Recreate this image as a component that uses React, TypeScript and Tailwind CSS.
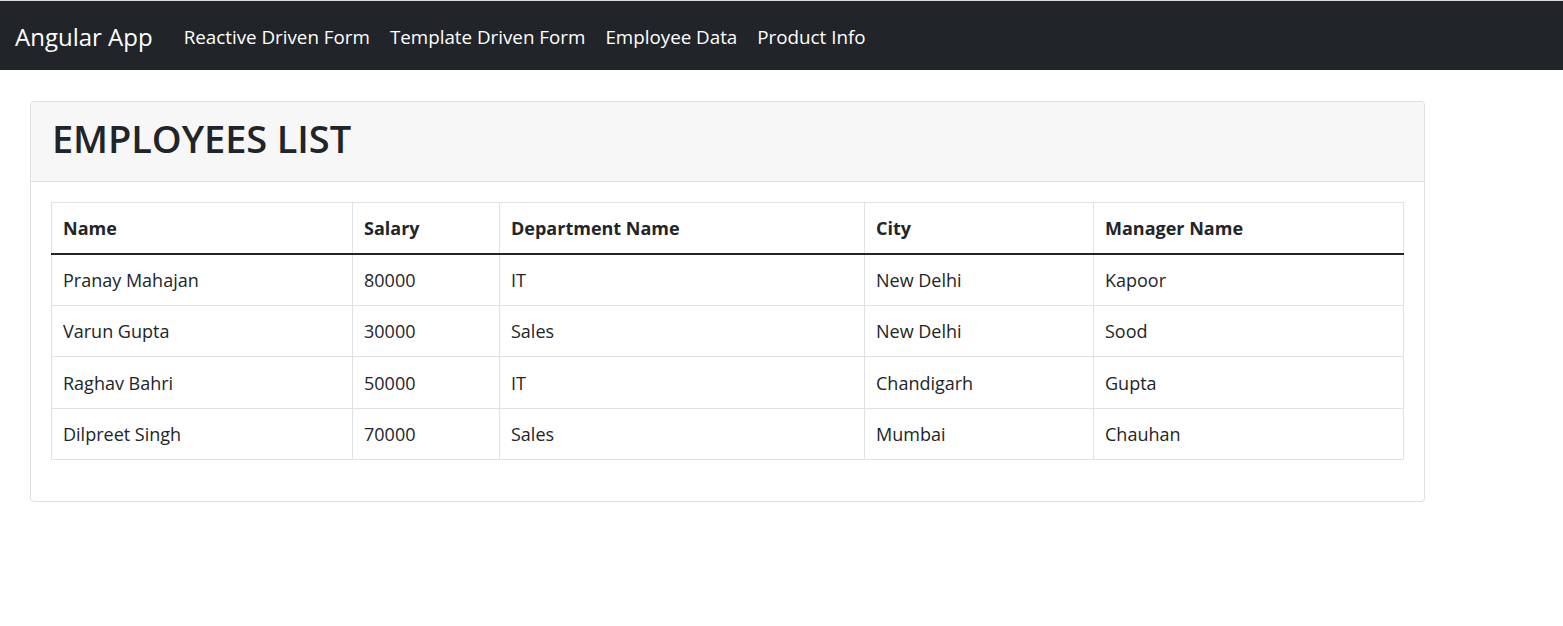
const employees = [
  { name: "Pranay Mahajan", salary: 80000, dept: "IT", city: "New Delhi", manager: "Kapoor" },
  { name: "Varun Gupta", salary: 30000, dept: "Sales", city: "New Delhi", manager: "Sood" },
  { name: "Raghav Bahri", salary: 50000, dept: "IT", city: "Chandigarh", manager: "Gupta" },
  { name: "Dilpreet Singh", salary: 70000, dept: "Sales", city: "Mumbai", manager: "Chauhan" },
];

const App = () => {
  return (
    <div className="min-h-[626px] bg-white text-[#212529] font-['Open_Sans',sans-serif]">
      <div className="border-t border-[#dcdcdc]">
        <nav className="flex items-center h-[69px] bg-[#212529] pl-[15px] pt-[3px]">
          <a className="text-[24px] text-white mr-[31px] leading-none">Angular App</a>
          <div className="flex gap-[20px] text-[18.8px] text-white">
            <a>Reactive Driven Form</a>
            <a>Template Driven Form</a>
            <a>Employee Data</a>
            <a>Product Info</a>
          </div>
        </nav>
      </div>

      <div className="pt-[31px] pl-[30px] w-[1425px]">
        <div className="border border-[#dfdfdf] rounded-[4px]">
          <div className="h-[80px] flex items-center px-[21px] pb-[6px] bg-[#f7f7f7] border-b border-[#dfdfdf] rounded-t-[4px]">
            <h1 className="text-[38px] font-semibold tracking-[-0.1px]">EMPLOYEES LIST</h1>
          </div>
          <div className="px-[20px] pt-[20px] pb-[41px]">
            <table className="w-[1353px] border-collapse text-[18px] table-fixed">
              <thead>
                <tr>
                  <th className="w-[301px] border border-[#dee2e6] border-b-[#212529] border-b-2 text-left font-bold px-[11px] h-[51px] pt-[2px]">Name</th>
                  <th className="w-[147px] border border-[#dee2e6] border-b-[#212529] border-b-2 text-left font-bold px-[11px] pt-[2px]">Salary</th>
                  <th className="w-[365px] border border-[#dee2e6] border-b-[#212529] border-b-2 text-left font-bold px-[11px] pt-[2px]">Department Name</th>
                  <th className="w-[229px] border border-[#dee2e6] border-b-[#212529] border-b-2 text-left font-bold px-[11px] pt-[2px]">City</th>
                  <th className="w-[310px] border border-[#dee2e6] border-b-[#212529] border-b-2 text-left font-bold px-[11px] pt-[2px]">Manager Name</th>
                </tr>
              </thead>
              <tbody>
                {employees.map((e) => (
                  <tr key={e.name}>
                    <td className="border border-[#dee2e6] px-[11px] h-[51.5px] pt-[2px]">{e.name}</td>
                    <td className="border border-[#dee2e6] px-[11px] pt-[2px]">{e.salary}</td>
                    <td className="border border-[#dee2e6] px-[11px] pt-[2px]">{e.dept}</td>
                    <td className="border border-[#dee2e6] px-[11px] pt-[2px]">{e.city}</td>
                    <td className="border border-[#dee2e6] px-[11px] pt-[2px]">{e.manager}</td>
                  </tr>
                ))}
              </tbody>
            </table>
          </div>
        </div>
      </div>
    </div>
  );
};

export default App;
